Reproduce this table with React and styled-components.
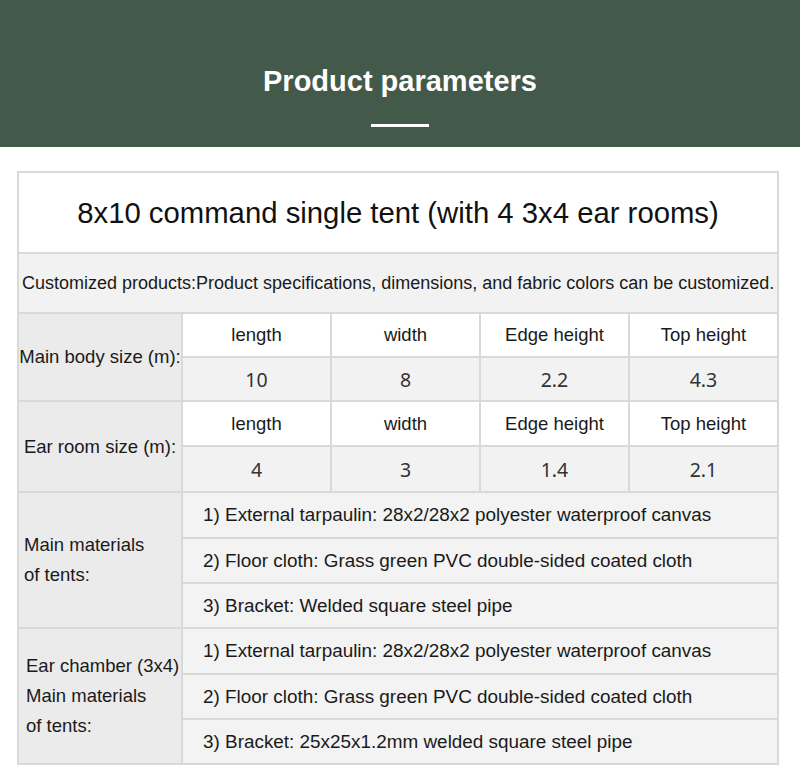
import { Fragment } from 'react';
import styled, { createGlobalStyle } from 'styled-components';

const GlobalStyle = createGlobalStyle`
  html, body {
    margin: 0;
    padding: 0;
    background: #ffffff;
  }
  body {
    font-family: "Liberation Sans", Arial, sans-serif;
    color: #161616;
  }
`;

const Page = styled.div`
  width: 800px;
  height: 770px;
  overflow: hidden;
  background: #ffffff;
`;

const Banner = styled.header`
  height: 147px;
  background: #435949;
  display: flex;
  flex-direction: column;
  align-items: center;
  padding-top: 64px;
  box-sizing: border-box;
`;

const BannerTitle = styled.h1`
  margin: 0;
  font-size: 29px;
  line-height: 34px;
  font-weight: 700;
  color: #ffffff;
`;

const BannerRule = styled.div`
  width: 58px;
  height: 3px;
  margin-top: 26px;
  background: #ffffff;
`;

const Body = styled.div`
  padding: 24px 21px 0 17px;
`;

const Table = styled.div`
  display: grid;
  grid-template-columns: 162px repeat(4, 1fr);
  grid-template-rows: 79px 58px 42px 42px 43px 44px 44px 43px 43px 44px 43px 43px;
  gap: 2px;
  padding: 2px;
  background: #d9d9d9;
`;

const TitleCell = styled.div`
  grid-column: 1 / -1;
  background: #ffffff;
  display: flex;
  align-items: center;
  justify-content: center;
  font-size: 29.3px;
  color: #111;
`;

const NoteCell = styled.div`
  grid-column: 1 / -1;
  background: #f2f2f2;
  display: flex;
  align-items: center;
  padding-left: 3px;
  font-size: 18px;
  white-space: nowrap;
  color: #1a1a1a;
`;

const LabelCell = styled.div`
  grid-row: span ${({ $span }) => $span};
  background: #ebebeb;
  display: flex;
  align-items: center;
  justify-content: ${({ $center }) => ($center ? 'center' : 'flex-start')};
  padding-left: ${({ $pad }) => $pad}px;
  font-size: 18.5px;
  line-height: 30px;
  white-space: nowrap;
  color: #1a1a1a;
`;

const HeadCell = styled.div`
  background: #ffffff;
  display: flex;
  align-items: center;
  justify-content: center;
  font-size: 18.5px;
  color: #1a1a1a;
`;

const ValueCell = styled.div`
  background: #f2f2f2;
  display: flex;
  align-items: center;
  justify-content: center;
  font-family: "Noto Sans", "DejaVu Sans", sans-serif;
  font-size: 19.5px;
  color: #333;
`;

const ItemCell = styled.div`
  grid-column: span 4;
  background: #f3f3f3;
  display: flex;
  align-items: center;
  padding-left: 20px;
  font-size: 18.9px;
  white-space: nowrap;
  color: #1a1a1a;
`;

const sizeRows = [
  { label: 'Main body size (m):', values: ['10', '8', '2.2', '4.3'] },
  { label: 'Ear room size (m):', values: ['4', '3', '1.4', '2.1'] },
];

const headers = ['length', 'width', 'Edge height', 'Top height'];

const materialGroups = [
  {
    label: ['Main materials', 'of tents:'],
    pad: 5,
    items: [
      '1) External tarpaulin: 28x2/28x2 polyester waterproof canvas',
      '2) Floor cloth: Grass green PVC double-sided coated cloth',
      '3) Bracket: Welded square steel pipe',
    ],
  },
  {
    label: ['Ear chamber (3x4)', 'Main materials', 'of tents:'],
    pad: 7,
    items: [
      '1) External tarpaulin: 28x2/28x2 polyester waterproof canvas',
      '2) Floor cloth: Grass green PVC double-sided coated cloth',
      '3) Bracket: 25x25x1.2mm welded square steel pipe',
    ],
  },
];

const App = () => {
  return (
    <Page>
      <GlobalStyle />
      <Banner>
        <BannerTitle>Product parameters</BannerTitle>
        <BannerRule />
      </Banner>

      <Body>
        <Table>
          <TitleCell>8x10 command single tent (with 4 3x4 ear rooms)</TitleCell>
          <NoteCell>
            Customized products:Product specifications, dimensions, and fabric colors can be customized.
          </NoteCell>

          {sizeRows.map(row => (
            <Fragment key={row.label}>
              <LabelCell $span={2} $center $pad={0}>
                {row.label}
              </LabelCell>
              {headers.map(h => (
                <HeadCell key={h}>{h}</HeadCell>
              ))}
              {row.values.map((v, i) => (
                <ValueCell key={i}>{v}</ValueCell>
              ))}
            </Fragment>
          ))}

          {materialGroups.map((group, gi) => (
            <Fragment key={gi}>
              <LabelCell $span={3} $pad={group.pad}>
                <div>
                  {group.label.map(line => (
                    <div key={line}>{line}</div>
                  ))}
                </div>
              </LabelCell>
              {group.items.map(item => (
                <ItemCell key={item}>{item}</ItemCell>
              ))}
            </Fragment>
          ))}
        </Table>
      </Body>
    </Page>
  );
};

export default App;
